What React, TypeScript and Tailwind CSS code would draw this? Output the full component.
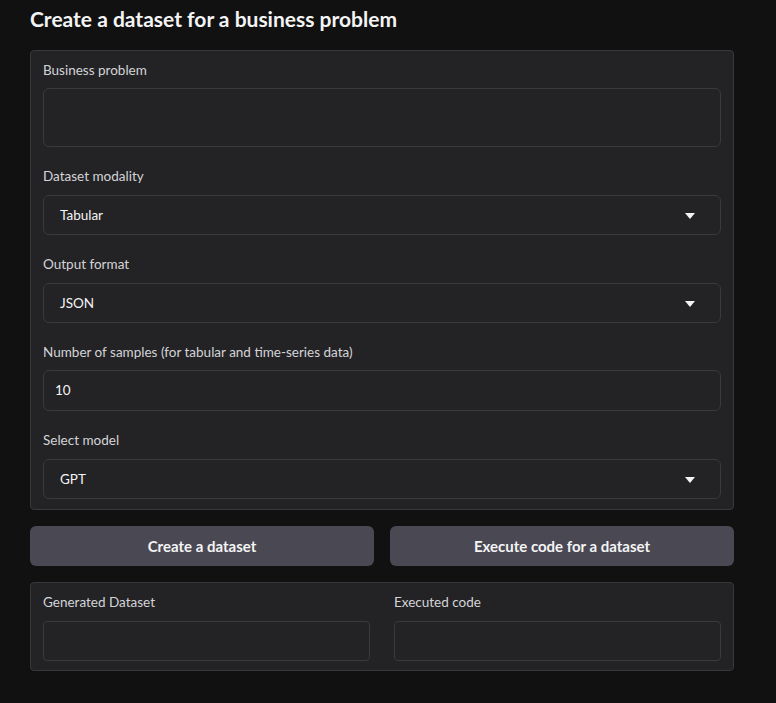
import React from 'react';

const font = { fontFamily: 'Lato, "Noto Sans", sans-serif' };

function Label({ children }: { children: React.ReactNode }) {
  return <div className="text-[13.5px] leading-[18px] text-[#d4d4d8]">{children}</div>;
}

function Select({ value }: { value: string }) {
  return (
    <div className="flex h-[40px] items-center justify-between rounded-[6px] border border-[#3a3a3e] bg-[#232326] pl-[16px] pr-[25px] text-[13.5px] text-[#f4f4f5]">
      <span>{value}</span>
      <svg width="10" height="6" viewBox="0 0 10 6" className="mt-[1px]">
        <path d="M0 0h10L5 6z" fill="#f4f4f5" />
      </svg>
    </div>
  );
}

export default function App() {
  return (
    <div className="min-h-[703px] w-full bg-[#111111] pb-[30px] pl-[30px] pt-[5px]" style={font}>
      <div className="w-[704px]">
        {/* Header */}
        <h1 className="text-[21px] font-bold leading-[28px] text-[#f4f4f5]">
          Create a dataset for a business problem
        </h1>

        {/* Inputs panel */}
        <div className="mt-[17px] flex flex-col gap-[20px] rounded-[4px] border border-[#38383c] bg-[#232326] px-[12px] pb-[10px] pt-[10px]">
          <div className="flex flex-col gap-[9px]">
            <Label>Business problem</Label>
            <div className="h-[59px] rounded-[6px] border border-[#3a3a3e] bg-[#232326]" />
          </div>
          <div className="flex flex-col gap-[10px]">
            <Label>Dataset modality</Label>
            <Select value="Tabular" />
          </div>
          <div className="flex flex-col gap-[10px]">
            <Label>Output format</Label>
            <Select value="JSON" />
          </div>
          <div className="flex flex-col gap-[9px]">
            <Label>Number of samples (for tabular and time-series data)</Label>
            <div className="flex h-[41px] items-center rounded-[6px] border border-[#3a3a3e] bg-[#232326] px-[11px] text-[13.5px] text-[#f4f4f5]">
              10
            </div>
          </div>
          <div className="flex flex-col gap-[10px]">
            <Label>Select model</Label>
            <Select value="GPT" />
          </div>
        </div>

        {/* Actions */}
        <div className="mt-[16px] flex gap-[16px]">
          <button className="h-[40px] flex-1 rounded-[6px] bg-[#4a4953] text-[15px] font-bold text-[#f4f4f5]">
            Create a dataset
          </button>
          <button className="h-[40px] flex-1 rounded-[6px] bg-[#4a4953] text-[15px] font-bold text-[#f4f4f5]">
            Execute code for a dataset
          </button>
        </div>

        {/* Outputs */}
        <div className="mt-[16px] grid grid-cols-2 gap-[24px] rounded-[4px] border border-[#38383c] bg-[#232326] px-[12px] pb-[9px] pt-[10px]">
          <div className="flex flex-col gap-[10px]">
            <Label>Generated Dataset</Label>
            <div className="h-[40px] rounded-[4px] border border-[#3a3a3e] bg-[#232326]" />
          </div>
          <div className="flex flex-col gap-[10px]">
            <Label>Executed code</Label>
            <div className="h-[40px] rounded-[4px] border border-[#3a3a3e] bg-[#232326]" />
          </div>
        </div>
      </div>
    </div>
  );
}
